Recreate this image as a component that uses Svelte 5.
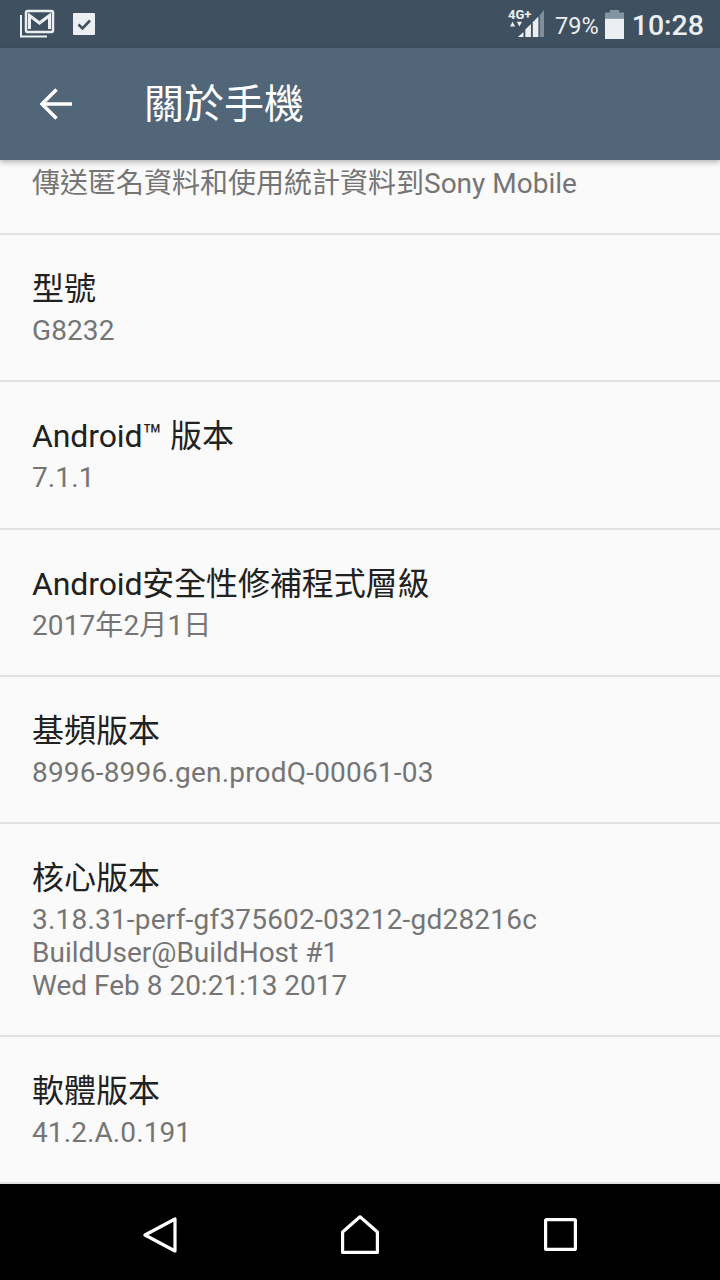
<script>
  const rows = [
    { title: '型號', lines: [{ text: 'G8232' }] },
    { title: 'Android™ 版本', latin: true, lines: [{ text: '7.1.1' }] },
    { title: 'Android安全性修補程式層級', latin: true, lines: [{ text: '2017年2月1日' }] },
    { title: '基頻版本', lines: [{ text: '8996-8996.gen.prodQ-00061-03', wide: true }] },
    {
      title: '核心版本',
      lines: [
        { text: '3.18.31-perf-gf375602-03212-gd28216c', wide: true },
        { text: 'BuildUser@BuildHost #1', tight: true },
        { text: 'Wed Feb 8 20:21:13 2017', tight: true }
      ]
    },
    { title: '軟體版本', lines: [{ text: '41.2.A.0.191' }] }
  ];
</script>

<div class="phone">
  <header class="status">
    <div class="status-left">
      <svg class="gmail" width="36" height="30" viewBox="0 0 36 30" fill="none">
        <path d="M2 6V27.500H28" stroke="#eceff1" stroke-width="2"/>
        <rect x="7" y="2" width="27" height="21" rx="1.500" stroke="#eceff1" stroke-width="2.500"/>
        <path d="M10.500 20V6.500L20.500 14L30.500 6.500V20" stroke="#eceff1" stroke-width="3"/>
      </svg>
      <svg width="22" height="22" viewBox="0 0 22 22">
        <rect width="22" height="22" rx="1" fill="#eceff1"/>
        <path d="M5.500 11.500L9.500 15.500L17 7.500" fill="none" stroke="#3f5160" stroke-width="2.600"/>
      </svg>
    </div>
    <div class="status-right">
      <div class="signal">
        <span class="net">4G+</span>
        <svg class="arrows" width="14" height="6" viewBox="0 0 14 7"><path d="M0 6.500L3 1L6 6.500ZM8 1H14L11 6.500Z" fill="#eceff1"/></svg>
        <svg class="bars" width="28" height="28" viewBox="0 0 30 30">
          <path d="M8 29V23.500L2 29Z" fill="#eceff1"/>
          <path d="M10 29V21L16 15V29Z" fill="#eceff1"/>
          <path d="M18 29V13L24 7V29Z" fill="#eceff1"/>
          <path d="M25.500 29V5.500L30 0V29Z" fill="#7f8f9b"/>
        </svg>
      </div>
      <span class="pct">79%</span>
      <svg class="battery" width="19" height="29" viewBox="0 0 19 30" preserveAspectRatio="none">
        <path d="M5 0H14V2.500H19V9H0V2.500H5Z" fill="#8494a0"/>
        <rect y="9" width="19" height="21" fill="#eceff1"/>
      </svg>
      <span class="time">10:28</span>
    </div>
  </header>

  <div class="toolbar">
    <svg class="back" width="32" height="32" viewBox="0 0 32 32" fill="none">
      <path d="M32 16H2.500M16.500 1.500L2 16L16.500 30.500" stroke="#fff" stroke-width="3.600"/>
    </svg>
    <h1>關於手機</h1>
  </div>

  <main class="list">
    <div class="row first">
      <p class="sub plain">傳送匿名資料和使用統計資料到Sony Mobile</p>
    </div>
    {#each rows as row}
      <section class="row">
        <h2 class:latin={row.latin}>{row.title}</h2>
        {#each row.lines as line}
          <p class="sub" class:wide={line.wide} class:tight={line.tight}>{line.text}</p>
        {/each}
      </section>
    {/each}
  </main>

  <nav class="nav">
    <svg width="34" height="36" viewBox="0 0 34 36" fill="none">
      <path d="M32 2V34L2 18Z" stroke="#fff" stroke-width="3.200" stroke-linejoin="round"/>
    </svg>
    <svg class="home" width="38" height="39" viewBox="0 0 38 39" fill="none">
      <path d="M1.600 37.400V17L19 1.800L36.400 17V37.400Z" stroke="#fff" stroke-width="3.200" stroke-linejoin="round"/>
    </svg>
    <svg width="33" height="33" viewBox="0 0 33 33" fill="none">
      <rect x="1.600" y="1.600" width="29.800" height="29.800" rx="1" stroke="#fff" stroke-width="3.200"/>
    </svg>
  </nav>
</div>

<style>
  :global(body) {
    margin: 0;
  }

  .phone {
    width: 720px;
    height: 1280px;
    display: flex;
    flex-direction: column;
    overflow: hidden;
    background: #fafafa;
    font-family: Roboto, "Noto Sans CJK TC", sans-serif;
  }

  .status {
    height: 48px;
    flex: none;
    display: flex;
    justify-content: space-between;
    align-items: center;
    padding: 0 16px 0 19px;
    background: #3f5160;
    color: #eceff1;
  }

  .status-left {
    display: flex;
    align-items: center;
    gap: 18px;
  }

  .status-right {
    display: flex;
    align-items: center;
  }

  .signal {
    position: relative;
    width: 36px;
    height: 30px;
  }

  .net {
    position: absolute;
    left: 0;
    top: -1px;
    font-size: 13px;
    line-height: 14px;
    font-weight: 700;
  }

  .arrows {
    position: absolute;
    left: 1px;
    top: 12px;
  }

  .bars {
    position: absolute;
    left: 8px;
    top: 1px;
  }

  .pct {
    margin-left: 11px;
    padding-top: 4px;
    font-size: 23.500px;
    line-height: 30px;
  }

  .battery {
    margin-left: 6px;
  }

  .time {
    margin-left: 8px;
    padding-top: 4px;
    font-size: 28.500px;
    font-weight: 500;
    line-height: 30px;
  }

  .toolbar {
    position: relative;
    z-index: 1;
    height: 112px;
    flex: none;
    display: flex;
    align-items: center;
    padding-left: 40px;
    background: #526679;
    box-shadow: 0 2px 6px rgba(0, 0, 0, 0.3);
  }

  h1 {
    margin: 2px 0 0 72px;
    color: #fff;
    font-size: 40px;
    font-weight: 400;
    line-height: 1;
  }

  .list {
    flex: 1;
    min-height: 0;
  }

  .row {
    box-sizing: border-box;
    padding: 30px 32px 0;
    height: 147.33px;
    border-bottom: 2px solid #e2e2e2;
  }

  .row:has(.sub:nth-of-type(3)) {
    height: 212.500px;
  }

  .first {
    height: 75px;
    padding-top: 7px;
  }

  h2 {
    margin: 0;
    color: #212121;
    font-size: 32px;
    font-weight: 400;
    line-height: 49px;
  }

  h2.latin {
    letter-spacing: -0.120px;
  }

  .sub {
    margin: 0;
    color: #757575;
    font-size: 28px;
    line-height: 33px;
    letter-spacing: 0.100px;
  }

  .sub.plain {
    letter-spacing: 0;
  }

  .sub.wide {
    letter-spacing: 0.200px;
  }

  .sub.tight {
    letter-spacing: 0;
  }

  .home {
    margin-left: -1px;
  }

  .nav {
    height: 96px;
    flex: none;
    box-sizing: border-box;
    display: flex;
    align-items: center;
    justify-content: space-between;
    padding: 5px 143px 0;
    background: #000;
  }
</style>
